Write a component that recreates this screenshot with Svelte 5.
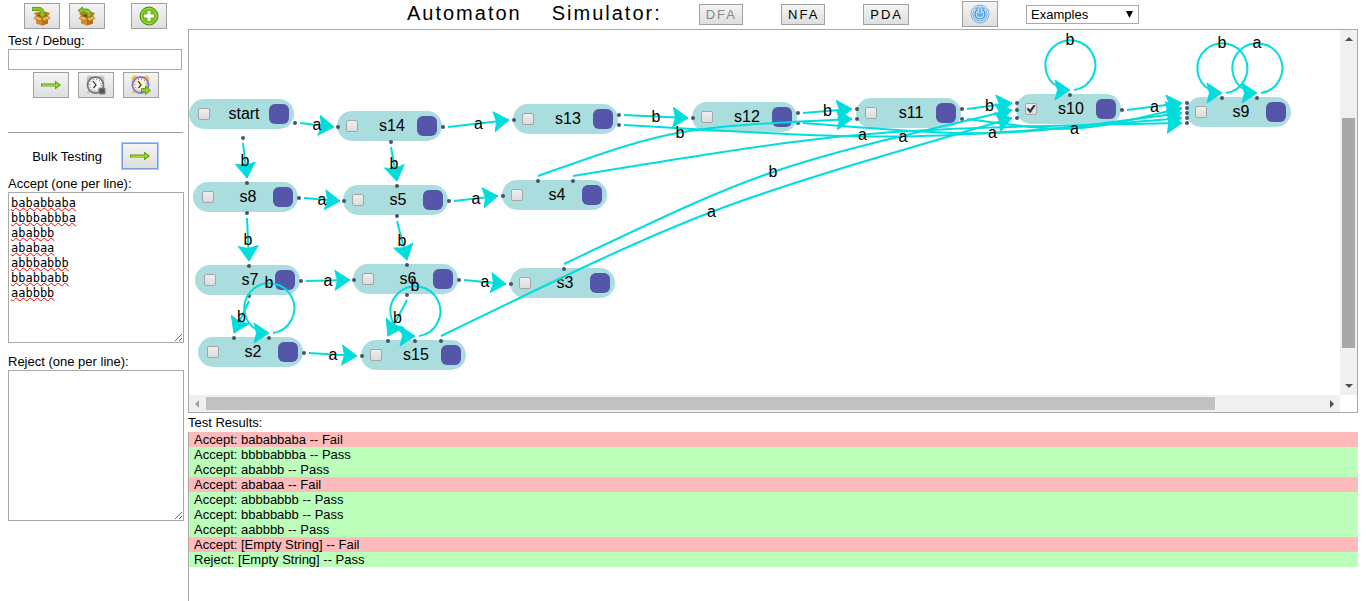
<script>
  const origin = { x: 189, y: 30 };
  const stage = { width: 1151, height: 365 };

  let nodes = $state([
    { id: 'start', x: 189, y: 99, accept: false },
    { id: 's14', x: 337, y: 111, accept: false },
    { id: 's13', x: 513, y: 104, accept: false },
    { id: 's12', x: 692, y: 102, accept: false },
    { id: 's11', x: 856, y: 98, accept: false },
    { id: 's10', x: 1016, y: 94, accept: true },
    { id: 's9', x: 1186, y: 97, accept: false },
    { id: 's8', x: 193, y: 182, accept: false },
    { id: 's5', x: 343, y: 185, accept: false },
    { id: 's4', x: 502, y: 180, accept: false },
    { id: 's7', x: 195, y: 265, accept: false },
    { id: 's6', x: 353, y: 264, accept: false },
    { id: 's3', x: 510, y: 268, accept: false },
    { id: 's2', x: 198, y: 337, accept: false },
    { id: 's15', x: 361, y: 340, accept: false }
  ]);

  // from x, from y, to x, to y, symbol, bend of the control point (dx, dy)
  const links = [
    [300, 123, 334, 127, 'a', 0, 0],
    [243, 143, 247, 178, 'b', 0, 0],
    [448, 127, 509, 120, 'a', 0, 0],
    [391, 147, 397, 181, 'b', 0, 0],
    [624, 115, 688, 118, 'b', 0, 0],
    [624, 125, 1182, 118, 'a', 0, 20],
    [803, 113, 852, 109, 'b', 0, 0],
    [803, 123, 1182, 113, 'a', 0, 20],
    [967, 109, 1012, 103, 'b', 0, 0],
    [967, 119, 1182, 108, 'a', 0, 20],
    [1127, 110, 1182, 103, 'a', 0, 0],
    [304, 198, 340, 201, 'a', 0, 0],
    [247, 218, 249, 261, 'b', 0, 0],
    [454, 201, 498, 196, 'a', 0, 0],
    [397, 221, 407, 260, 'b', 0, 0],
    [538, 176, 852, 119, 'b', -20, -20],
    [573, 176, 1182, 123, 'a', -20, -20],
    [306, 281, 350, 280, 'a', 0, 0],
    [249, 301, 234, 333, 'b', 0, 0],
    [464, 280, 506, 284, 'a', 0, 0],
    [407, 300, 388, 336, 'b', 0, 0],
    [564, 264, 1012, 110, 'b', -20, -20],
    [309, 353, 357, 356, 'a', 0, 0],
    [441, 336, 1012, 118, 'a', -20, -20]
  ];

  const loops = [
    [1070, 90, 'b'],
    [1222, 93, 'b'],
    [1257, 93, 'a'],
    [269, 333, 'b'],
    [415, 336, 'b']
  ];

  const dots = [
    [295, 123], [243, 138],
    [338, 127], [443, 127], [391, 142],
    [514, 120], [619, 115], [619, 125],
    [693, 118], [798, 113], [798, 123],
    [857, 109], [857, 119], [962, 109], [962, 119],
    [1017, 103], [1017, 110], [1017, 118], [1070, 95], [1122, 110],
    [1187, 103], [1187, 108], [1187, 113], [1187, 118], [1187, 123], [1222, 98], [1257, 98],
    [247, 183], [299, 198], [247, 213],
    [344, 201], [397, 186], [449, 201], [397, 216],
    [503, 196], [538, 181], [573, 181],
    [249, 266], [301, 281], [249, 296],
    [354, 280], [407, 265], [459, 280], [407, 295],
    [511, 284], [564, 269],
    [234, 338], [269, 338], [304, 353],
    [362, 356], [388, 341], [415, 341], [441, 341]
  ];

  function arrow(x, y, dx, dy) {
    const n = Math.hypot(dx, dy);
    const ux = dx / n;
    const uy = dy / n;
    const at = (back, side) => `${x - ux * back - uy * side},${y - uy * back + ux * side}`;
    return [at(0, 0), at(15, 10), at(12.5, 0), at(15, -10)].join(' ');
  }

  const edges = links.map(([x1, y1, x2, y2, symbol, bx, by]) => {
    const cx = (x1 + x2) / 2 + bx;
    const cy = (y1 + y2) / 2 + by;
    return {
      d: `M${x1} ${y1}C${cx} ${cy} ${cx} ${cy} ${x2} ${y2}`,
      head: arrow(x2, y2, x2 - cx, y2 - cy),
      lx: (x1 + x2) / 2 + bx * 0.75,
      ly: (y1 + y2) / 2 + by * 0.75,
      symbol
    };
  });

  const rings = loops.map(([x, y, symbol]) => ({
    d: `M${x + 4} ${y}A25 25 0 1 0 ${x - 12} ${y - 3}`,
    head: arrow(x, y, 1, 0),
    lx: x,
    ly: y - 50,
    symbol
  }));

  const drawn = [...edges, ...rings];

  let accept = $state('bababbaba\nbbbbabbba\nababbb\nababaa\nabbbabbb\nbbabbabb\naabbbb');
  let reject = $state('');
  let debug = $state('');

  const results = [
    ['Accept', 'bababbaba', 'Fail'],
    ['Accept', 'bbbbabbba', 'Pass'],
    ['Accept', 'ababbb', 'Pass'],
    ['Accept', 'ababaa', 'Fail'],
    ['Accept', 'abbbabbb', 'Pass'],
    ['Accept', 'bbabbabb', 'Pass'],
    ['Accept', 'aabbbb', 'Pass'],
    ['Accept', '[Empty String]', 'Fail'],
    ['Reject', '[Empty String]', 'Pass']
  ];
</script>

{#snippet box()}
  <path d="M4 10h12v7.500l-6 2-6-2z" fill="#d48a2c" />
  <path d="M10 12l6-2v7.500l-6 2z" fill="#b86f1c" />
  <path d="M4 10l6 2-2 3-6-2.500zM16 10l-6 2 2 3 6-2.500z" fill="#efb65e" stroke="#b4701f" stroke-width=".7" />
  <path d="M4 10l-2-3 5-1.500 3 2 3-2 5 1.500-2 3-6 2z" fill="#c97e27" />
  <path d="M5 9.500l5-2 5 2-5 2z" fill="#7c4713" />
{/snippet}

{#snippet greenArrow()}
  <svg width="20" height="20" viewBox="0 0 20 20" aria-hidden="true">
    <path d="M0 8.500h14V5.500l6 4.500-6 4.500v-3H0z" fill="#5f9f0e" />
    <path d="M1 9.500h14V7.500l3.300 2.500-3.300 2.500v-1.500H1z" fill="#a0d92f" />
  </svg>
{/snippet}

{#snippet clock(rim, face, ink, bell)}
  <circle cx="4" cy="4" r="3.500" fill={bell} />
  <circle cx="15" cy="4" r="3.500" fill={bell} />
  <path d="M4 15l-2 3M15 15l2 3" stroke={bell} stroke-width="2.500" />
  <circle cx="9.500" cy="10" r="8" fill={face} stroke={rim} stroke-width="1.800" />
  <circle cx="9.500" cy="10" r="5.800" fill="none" stroke={ink} stroke-width=".9" stroke-dasharray=".8 2.237" />
  <path d="M7 6l3 4-2.500 3" fill="none" stroke={ink} stroke-width="1.200" />
{/snippet}

<div class="page">
  <aside>
    <div class="tools files">
      <button class="icon" aria-label="Load">
        <svg width="20" height="20" viewBox="0 0 20 20" aria-hidden="true">
          {@render box()}
          <path d="M0 1.500h7c3.500 0 5 2 5 6h2.500L10.500 12 6.500 7.500H9C9 5.500 8.500 4.500 6.500 4.500H0z" fill="#8cc81e" stroke="#4f8a0c" stroke-width=".8" />
        </svg>
      </button>
      <button class="icon" aria-label="Save">
        <svg width="20" height="20" viewBox="0 0 20 20" aria-hidden="true">
          {@render box()}
          <path d="M1 4.500L5.500 1v2H9c4 0 5.500 2.500 5 8h-4c.5-4-.5-5-2.500-5h-2v2z" fill="#8cc81e" stroke="#4f8a0c" stroke-width=".8" />
        </svg>
      </button>
      <button class="icon add" aria-label="Add state">
        <svg width="20" height="20" viewBox="0 0 20 20" aria-hidden="true">
          <circle cx="10" cy="10" r="9" fill="#72bf1c" stroke="#4c8c0b" />
          <circle cx="10" cy="10" r="7.600" fill="none" stroke="#a3dc4e" />
          <path d="M10 5v10M5 10h10" stroke="#fff" stroke-width="3" />
        </svg>
      </button>
    </div>

    <label for="debug">Test / Debug:</label>
    <input id="debug" type="text" bind:value={debug} />
    <div class="tools runs">
      <button class="icon" aria-label="Test">{@render greenArrow()}</button>
      <button class="icon" aria-label="Stop debugging">
        <svg width="20" height="20" viewBox="0 0 20 20" aria-hidden="true">
          {@render clock('#777', '#f4f4f4', '#333', '#c4c4c4')}
          <path d="M13 13h6v6h-6z" fill="#555" stroke="#888" />
        </svg>
      </button>
      <button class="icon" aria-label="Debug">
        <svg width="20" height="20" viewBox="0 0 20 20" aria-hidden="true">
          {@render clock('#7a78d8', '#fbf3d4', '#333', '#f3bd55')}
          <path d="M10.500 13.500h4V11l5 4.500-5 4v-2.500h-4z" fill="#8fd022" stroke="#4c8c0b" stroke-width=".8" />
        </svg>
      </button>
    </div>

    <hr />

    <div class="bulk">
      <span>Bulk Testing</span>
      <button class="icon focus" aria-label="Run bulk tests">{@render greenArrow()}</button>
    </div>
    <label for="accept">Accept (one per line):</label>
    <textarea id="accept" bind:value={accept}></textarea>
    <label class="second" for="reject">Reject (one per line):</label>
    <textarea id="reject" bind:value={reject}></textarea>
  </aside>

  <main>
    <header>
      <h1><span>Automaton</span><span>Simulator:</span></h1>
      <div class="modes">
        <button class="mode" disabled>DFA</button>
        <button class="mode">NFA</button>
        <button class="mode">PDA</button>
      </div>
      <button class="icon power" aria-label="Reset">
        <svg width="20" height="20" viewBox="0 0 20 20" aria-hidden="true">
          <circle cx="10" cy="10" r="9" fill="#d5eafa" stroke="#7db0dc" />
          <circle cx="10" cy="10" r="7.500" fill="#65ace0" />
          <path d="M7 6a5 5 0 1 0 6 0" fill="none" stroke="#e7f5ff" stroke-width="3" />
          <path d="M10 3.500v6" stroke="#e7f5ff" stroke-width="3.400" />
          <path d="M7 6a5 5 0 1 0 6 0M10 4v5.500" fill="none" stroke="#3c86c4" stroke-width="1.200" />
        </svg>
      </button>
      <div class="picker">
        <select aria-label="Examples">
          <option>Examples</option>
        </select>
        <svg width="7" height="7" viewBox="0 0 7 7" aria-hidden="true"><path d="M0 0h7L3.500 7z" /></svg>
      </div>
    </header>

    <section class="canvas" aria-label="Automaton">
      <div class="stage" style:height="{stage.height}px">
        {#each nodes as node (node.id)}
          <div class="node" style:left="{node.x - origin.x}px" style:top="{node.y - origin.y}px">
            <input type="checkbox" aria-label="{node.id} accepts" bind:checked={node.accept} />
            <span>{node.id}</span>
            <i></i>
          </div>
        {/each}
        <svg
          class="links"
          width={stage.width}
          height={stage.height}
          viewBox="{origin.x} {origin.y} {stage.width} {stage.height}"
        >
          {#each dots as [x, y]}
            <circle cx={x} cy={y} r="2" fill="#445566" />
          {/each}
          {#each drawn as link}
            <path d={link.d} fill="none" stroke="#00dddd" stroke-width="2" />
            <polygon points={link.head} fill="#00dddd" stroke="#00dddd" />
          {/each}
          {#each drawn as link}
            <text x={link.lx} y={link.ly + 5} text-anchor="middle">{link.symbol}</text>
          {/each}
        </svg>
      </div>
      <div class="bar vertical" aria-hidden="true">
        <svg width="17" height="17" viewBox="0 0 17 17"><path d="M5 11l4-4 4 4z" fill="#505050" /></svg>
        <b class="before"></b><b class="thumb"></b><b class="after"></b>
        <svg width="17" height="17" viewBox="0 0 17 17"><path d="M5 6l4 4 4-4z" fill="#505050" /></svg>
      </div>
      <div class="bar horizontal" aria-hidden="true">
        <svg width="17" height="17" viewBox="0 0 17 17"><path d="M10 5L6 9l4 4z" fill="#a3a3a3" /></svg>
        <b class="thumb"></b><b class="after"></b>
        <svg width="17" height="17" viewBox="0 0 17 17"><path d="M7 5l4 4-4 4z" fill="#505050" /></svg>
      </div>
    </section>

    <h2>Test Results:</h2>
    <ul>
      {#each results as [kind, word, verdict]}
        <li class:fail={verdict === 'Fail'}>{kind}: {word} -- {verdict}</li>
      {/each}
    </ul>
  </main>
</div>

<style>
  :global(body) {
    margin: 0;
    background: #fff;
  }
  .page {
    display: flex;
    min-height: 100vh;
    font: 13px/15px "Liberation Sans", Arial, sans-serif;
    color: #000;
  }
  .page * {
    box-sizing: border-box;
  }
  aside {
    flex: none;
    width: 188px;
    padding: 3px 4px 0 8px;
    display: flex;
    flex-direction: column;
  }
  .tools {
    display: flex;
    gap: 9px;
  }
  .files {
    padding-left: 16px;
    margin-bottom: 4px;
  }
  .add {
    margin-left: 17px;
  }
  button {
    font: inherit;
    color: #000;
    border: 1px solid #a0a0a0;
    border-radius: 0;
    background: linear-gradient(#f4f4f4, #dedede);
    padding: 0;
  }
  .icon {
    flex: none;
    display: flex;
    align-items: center;
    justify-content: center;
    width: 36px;
    height: 26px;
  }
  input[type='text'] {
    width: 174px;
    height: 21px;
    margin: 1px 0 2px;
    border: 1px solid #a9a9a9;
    padding: 0 2px;
    font: inherit;
  }
  .runs {
    padding-left: 25px;
  }
  hr {
    width: 175px;
    margin: 34px 0 10px;
    border: 0;
    border-top: 1px solid #999;
  }
  .bulk {
    display: flex;
    align-items: center;
    justify-content: flex-end;
    gap: 20px;
    padding-right: 26px;
    margin-bottom: 7px;
  }
  .focus {
    border-color: #7a9fe0;
    box-shadow: 0 0 0 1px #a9c6fa;
  }
  textarea {
    width: 176px;
    height: 151px;
    margin: 1px 0 0;
    border: 1px solid #a9a9a9;
    padding: 3px 2px;
    font: 12px/15px "DejaVu Sans Mono", monospace;
    color: #000;
    resize: both;
    text-decoration: underline wavy #f00 1px;
    text-underline-offset: 0;
  }
  .second {
    margin-top: 11px;
  }
  main {
    flex: 1;
    min-width: 0;
    margin-right: 8px;
    display: flex;
    flex-direction: column;
  }
  header {
    display: flex;
    justify-content: center;
    align-items: center;
    height: 29px;
  }
  h1 {
    display: flex;
    gap: 30px;
    margin: 0 37px 4px 0;
    font-size: 20px;
    line-height: 22px;
    font-weight: 400;
    letter-spacing: 2px;
  }
  .modes {
    display: flex;
    gap: 38px;
  }
  .mode {
    height: 21px;
    padding: 0 5px 0 6px;
    letter-spacing: 2px;
  }
  .mode:disabled {
    color: #888;
  }
  .power {
    margin: 0 28px 2px 53px;
  }
  .picker {
    display: grid;
    align-items: center;
    width: 113px;
  }
  .picker > * {
    grid-area: 1 / 1;
  }
  .picker svg {
    justify-self: end;
    margin-right: 6px;
    pointer-events: none;
  }
  select {
    appearance: none;
    width: 100%;
    height: 19px;
    padding: 0 4px;
    border: 1px solid #a9a9a9;
    border-radius: 0;
    background: #fff;
    font: inherit;
    color: #000;
  }
  .canvas {
    display: grid;
    grid-template-columns: 1fr 17px;
    grid-template-rows: auto 17px;
    border: 1px solid #a9a9a9;
  }
  .stage {
    position: relative;
    overflow: hidden;
    min-width: 0;
  }
  .node {
    position: absolute;
    display: flex;
    align-items: center;
    width: 105px;
    height: 30px;
    padding: 0 5px 0 9px;
    border-radius: 15px;
    background: #aadddd;
    font-size: 16px;
    line-height: 30px;
  }
  .node span {
    flex: 1;
    padding-left: 9px;
    text-align: center;
  }
  .node i {
    width: 20px;
    height: 20px;
    border-radius: 6px;
    background: #5555aa;
  }
  .node input {
    appearance: none;
    display: grid;
    place-items: center;
    width: 12px;
    height: 12px;
    margin: 0;
    border: 1px solid #a6a6a6;
    border-radius: 2px;
    background: linear-gradient(#eee, #dcdcdc);
  }
  .node input:checked::after {
    content: '';
    width: 9px;
    height: 9px;
    background: #333;
    clip-path: polygon(0 50%, 20% 35%, 38% 58%, 82% 0, 100% 14%, 42% 96%);
  }
  .links {
    position: absolute;
    left: 0;
    top: 0;
    pointer-events: none;
    font-size: 16px;
  }
  .bar {
    display: flex;
    background: #f0f0f0;
  }
  .bar svg {
    flex: none;
  }
  .vertical {
    flex-direction: column;
  }
  .vertical .before {
    flex: 71;
  }
  .vertical .thumb {
    flex: 230;
    margin: 0 2px;
    background: #a8a8a8;
  }
  .vertical .after {
    flex: 30;
  }
  .horizontal .thumb {
    flex: 1009;
    margin: 2px 0;
    background: #c1c1c1;
  }
  .horizontal .after {
    flex: 108;
  }
  h2 {
    margin: 2px 0;
    font: inherit;
  }
  ul {
    flex: 1;
    margin: 0;
    padding: 0;
    list-style: none;
    border-left: 1px solid #a9a9a9;
  }
  li {
    padding-left: 5px;
    background: #bbffbb;
  }
  li.fail {
    background: #ffbbbb;
  }
</style>
